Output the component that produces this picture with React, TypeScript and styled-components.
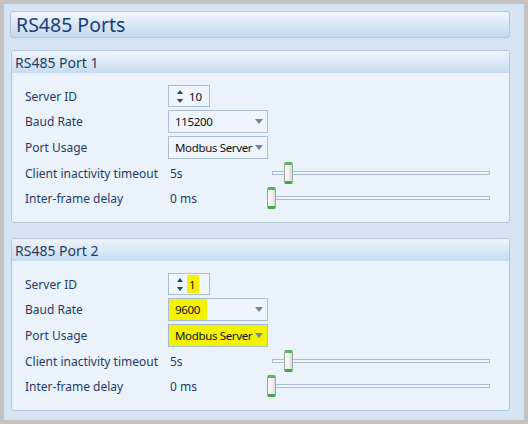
import * as React from "react";
import styled, { createGlobalStyle } from "styled-components";

const Global = createGlobalStyle`
	html, body {
		margin: 0;
		padding: 0;
		background: #c4c4c4;
	}
	* {
		box-sizing: border-box;
	}
`;

const Page = styled.div`
	width: 528px;
	height: 424px;
	border: 4px solid #c4c4c4;
	background: #d6e4f3;
	padding: 7px 14px 0 6px;
	font-family: "Noto Sans", "Open Sans", sans-serif;
	display: flex;
	flex-direction: column;
`;

const TitleBar = styled.div`
	height: 27px;
	border: 1px solid #b3c3d8;
	border-radius: 3px;
	background: linear-gradient(#f3f7fc, #dce8f5 45%, #c6daef);
	padding-left: 5px;
	display: flex;
	align-items: center;
	font-size: 19.5px;
	color: #1b3d7a;
	margin-bottom: 12px;
`;

const Group = styled.div<{ $gapAfter?: number }>`
	height: 173px;
	margin-left: 1px;
	border: 1px solid #b6c6da;
	border-radius: 3px;
	background: #eaf3fc;
	margin-bottom: ${(p) => p.$gapAfter ?? 0}px;
	display: flex;
	flex-direction: column;
	overflow: hidden;
`;

const GroupHeader = styled.div`
	height: 22px;
	flex: none;
	background: linear-gradient(#eef4fb, #dbe8f6 50%, #c7dbf0);
	padding-left: 3px;
	display: flex;
	align-items: center;
	font-size: 14px;
	color: #233e63;
`;

const Rows = styled.div`
	padding: 12px 0 0 13px;
	display: flex;
	flex-direction: column;
	gap: 3px;
`;

const Row = styled.div<{ $h: number }>`
	height: ${(p) => p.$h}px;
	display: flex;
	align-items: center;
`;

const Label = styled.div`
	width: 143px;
	flex: none;
	font-size: 12px;
	color: #1e3a68;
	white-space: nowrap;
`;

const Value = styled.div`
	width: 100px;
	flex: none;
	padding-left: 2px;
	font-size: 12px;
	color: #1e3a68;
`;

const Spinner = styled.div`
	width: 42px;
	height: 22px;
	border: 1px solid #abbdd3;
	background: #eef5fc;
	display: flex;
	align-items: center;
	font-size: 11.5px;
	color: #111;
`;

const SpinArrows = styled.div`
	width: 20px;
	display: flex;
	flex-direction: column;
	align-items: center;
	gap: 5px;
	padding-left: 1px;
`;

const SpinValue = styled.span<{ $mark?: boolean }>`
	padding: 2px 3px 1px 2px;
	background: ${(p) => (p.$mark ? "#f4f200" : "transparent")};
	margin-left: -2px;
`;

const Combo = styled.div<{ $mark?: "text" | "all" }>`
	width: 100px;
	height: 23px;
	border: 1px solid #abbdd3;
	background: ${(p) =>
		p.$mark === "all"
			? "#f4f200"
			: p.$mark === "text"
				? "linear-gradient(90deg, #f4f200 0 38px, #eef5fc 38px)"
				: "#eef5fc"};
	display: flex;
	align-items: center;
	justify-content: space-between;
	padding: 0 4px 0 6px;
	font-size: 11.5px;
	letter-spacing: -0.35px;
	white-space: nowrap;
	color: #111;
`;

const Slider = styled.div<{ $inset: number }>`
	position: relative;
	margin-left: ${(p) => p.$inset}px;
	width: ${(p) => 222 - p.$inset}px;
	height: 22px;
	display: flex;
	align-items: center;
`;

const Track = styled.div`
	width: 100%;
	height: 4px;
	border: 1px solid #a9bcd3;
	background: #f0f5fb;
`;

const Thumb = styled.div`
	position: absolute;
	top: 0;
	width: 9px;
	height: 22px;
	border-radius: 2px;
	border: 1px solid #98a898;
	border-top: 3px solid #5bb45b;
	border-bottom: 3px solid #46a346;
	background: linear-gradient(90deg, #fdfdfd, #efefef 60%, #d8d8d8);
`;

const Triangle = ({ up }: { up?: boolean }) => (
	<svg width="6" height="4" viewBox="0 0 6 4">
		<path d={up ? "M0 4 L3 0 L6 4 Z" : "M0 0 L3 4 L6 0 Z"} fill="#2c4468" />
	</svg>
);

const DropArrow = () => (
	<svg width="8" height="5" viewBox="0 0 8 5">
		<path d="M0 0 L4 5 L8 0 Z" fill="#6f85a8" />
	</svg>
);

type PortProps = {
	title: string;
	id: string;
	baud: string;
	marked?: boolean;
	gapAfter?: number;
};

function Port({ title, id, baud, marked, gapAfter }: PortProps) {
	return (
		<Group $gapAfter={gapAfter}>
			<GroupHeader>{title}</GroupHeader>
			<Rows>
				<Row $h={22}>
					<Label>Server ID</Label>
					<Spinner>
						<SpinArrows>
							<Triangle up />
							<Triangle />
						</SpinArrows>
						<SpinValue $mark={marked}>{id}</SpinValue>
					</Spinner>
				</Row>
				<Row $h={23}>
					<Label>Baud Rate</Label>
					<Combo $mark={marked ? "text" : undefined}>
						{baud}
						<DropArrow />
					</Combo>
				</Row>
				<Row $h={23}>
					<Label>Port Usage</Label>
					<Combo $mark={marked ? "all" : undefined}>
						Modbus Server
						<DropArrow />
					</Combo>
				</Row>
				<Row $h={22}>
					<Label>Client inactivity timeout</Label>
					<Value>5s</Value>
					<Slider $inset={4}>
						<Track />
						<Thumb style={{ left: 12 }} />
					</Slider>
				</Row>
				<Row $h={22}>
					<Label>Inter-frame delay</Label>
					<Value>0 ms</Value>
					<Slider $inset={0}>
						<Track />
						<Thumb style={{ left: -1 }} />
					</Slider>
				</Row>
			</Rows>
		</Group>
	);
}

export default function App() {
	return (
		<>
			<Global />
			<Page>
				<TitleBar>RS485 Ports</TitleBar>
				<Port title="RS485 Port 1" id="10" baud="115200" gapAfter={15} />
				<Port title="RS485 Port 2" id="1" baud="9600" marked />
			</Page>
		</>
	);
}
